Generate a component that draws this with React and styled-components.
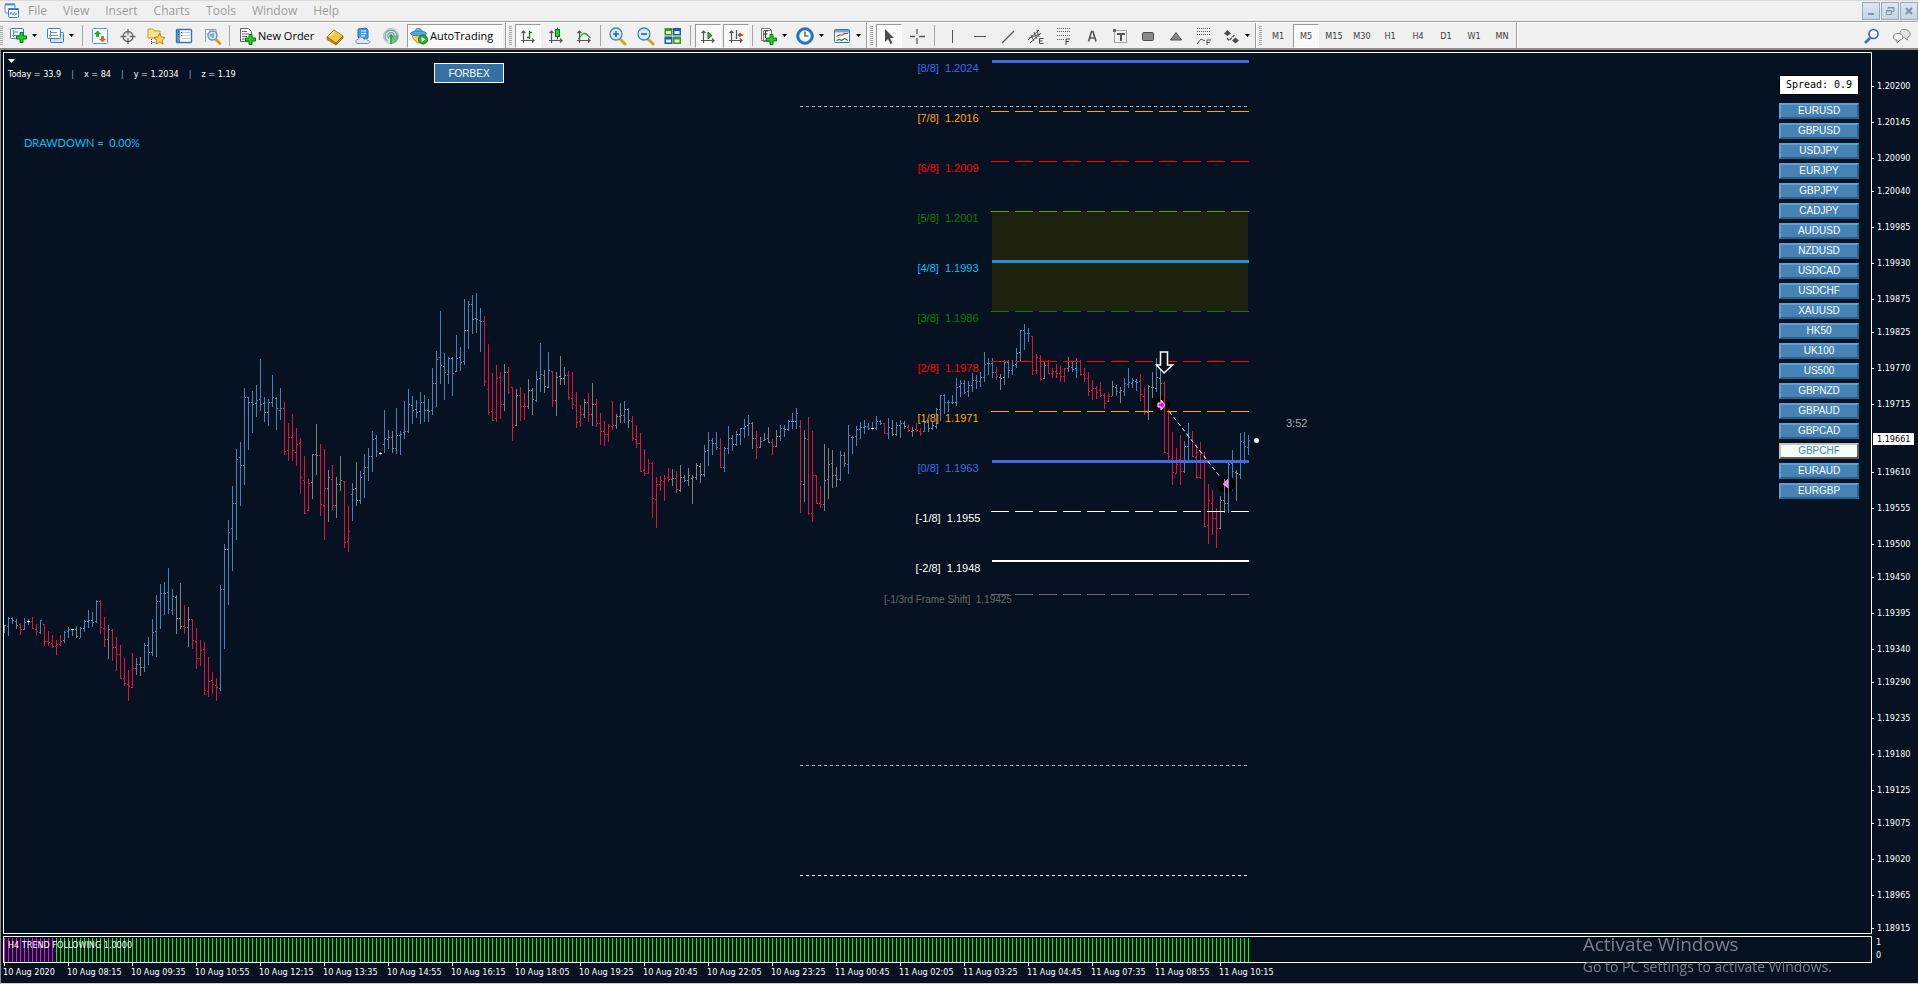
import React, { useState } from "react";
import styled, { createGlobalStyle, css } from "styled-components";

const UI_FONT = `"Open Sans", "Noto Sans", sans-serif`;
const TICK_FONT = `"DejaVu Sans Condensed", "DejaVu Sans", sans-serif`;
const ARIAL = `"Liberation Sans", Arial, sans-serif`;

const GlobalStyle = createGlobalStyle`
    * { box-sizing: border-box; }
    body { margin: 0; background: #061222; overflow: hidden; }
    button { font: inherit; color: inherit; padding: 0; border: none; background: none; cursor: pointer; }
`;

const Window = styled.div`
    height: 100vh;
    display: flex;
    flex-direction: column;
    background: #061222;
    font-family: ${UI_FONT};
`;

/* ---------- menu bar ---------- */

const MenuBar = styled.nav`
    display: flex;
    align-items: center;
    height: 22px;
    padding-left: 4px;
    background: #f0f0f0;
    border-top: 1px solid #dadada;
    border-bottom: 1px solid #a0a0a0;
`;

const MenuItem = styled.button`
    padding: 0 8px;
    font-size: 12px;
    line-height: 20px;
    color: #9c9c9c;
`;

const AppIcon = styled.svg`
    width: 16px;
    height: 16px;
    flex: none;
`;

const WindowButtons = styled.div`
    display: flex;
    gap: 1px;
    margin-left: auto;
`;

const WindowButton = styled.button`
    width: 18px;
    height: 18px;
    display: flex;
    align-items: center;
    justify-content: center;
    background: linear-gradient(#dbe6f2, #c3d4e6);
    border: 1px solid #93a9bf;
`;

/* ---------- toolbar ---------- */

const ToolBar = styled.div`
    display: flex;
    align-items: center;
    height: 28px;
    flex: none;
    background: #f0f0f0;
    border-top: 1px solid #fff;
    border-bottom: 2px solid #8a8a8a;
    color: #000;
`;

const Grip = styled.span`
    width: 3px;
    height: 19px;
    margin: 0 2px;
    background: repeating-linear-gradient(#a4a4a4 0 1px, #f4f4f4 1px 2px);

    &:first-child { margin-left: 0; }
`;

const Separator = styled.span`
    width: 1px;
    height: 21px;
    margin: 0 ${(p) => (p.$tight ? "2px" : "3px")};
    background: #a6a6a6;
`;

const Edge = styled.span`
    width: 2px;
    height: 25px;
    border-left: 1px solid #9a9a9a;
    border-right: 1px solid #fff;
`;

const pressed = css`
    background: #f9f9f9;
    border: 1px solid #fff;
    border-top-color: #9a9a9a;
    border-left-color: #9a9a9a;
`;

const ToolButton = styled.button`
    width: 26px;
    height: 24px;
    margin: 0 1px;
    flex: none;
    display: flex;
    align-items: center;
    justify-content: center;
    border: 1px solid transparent;
    ${(p) => p.$pressed && pressed}
`;

const DropButton = styled.button`
    width: 37px;
    height: 24px;
    padding-left: 3px;
    flex: none;
    display: flex;
    align-items: center;
    gap: 3px;
`;

const LabelButton = styled.button`
    display: flex;
    align-items: center;
    width: ${(p) => p.$width};
    height: 24px;
    padding-left: ${(p) => (p.$pressed ? "1px" : "3px")};
    margin: ${(p) => (p.$pressed ? "0 2px" : "0")};
    gap: 1px;
    font-size: 11px;
    white-space: nowrap;
    border: 1px solid transparent;
    ${(p) => p.$pressed && pressed}
`;

const TimeframeButton = styled(ToolButton)`
    font-family: ${TICK_FONT};
    font-size: 9px;
    color: #3c3c3c;
`;

const RightTools = styled.div`
    display: flex;
    gap: 2px;
    margin: 0 2px 0 auto;
`;

const IconBox = styled.svg`
    width: 20px;
    height: 20px;
    flex: none;
    display: block;
`;

const CaretDown = () => (
    <svg width="7" height="4" viewBox="0 0 7 4"><path d="M1 0h5L3.500 3z" fill="#000" /></svg>
);

const Plus = ({ x = 9, y = 8 }) => (
    <path
        transform={`translate(${x} ${y})`}
        d="M4 .5h3V4h3.500v3H7v3.500H4V7H.5V4H4z"
        fill="#1fd41f" stroke="#0a7d0a"
    />
);

const Axes = () => (
    <path d="M5.500 17V5M3.500 7l2-2 2 2M3 14.500h13M14 12.500l2 2-2 2" fill="none" stroke="#555" strokeWidth="1.200" />
);

const icons = {
    newChart: (
        <>
            <rect x="2.500" y="2.500" width="13" height="10" rx="1" fill="#eef6fd" stroke="#3f7fc0" />
            <path d="M5.500 4v7M4 9.500h7M5 6h5" stroke="#5d8fb8" fill="none" />
            <Plus x={8} y={6} />
        </>
    ),
    profiles: (
        <>
            <rect x="5.500" y="6.500" width="13" height="10" rx="1" fill="#cfe2f4" stroke="#3f7fc0" />
            <rect x="2.500" y="2.500" width="13" height="10" rx="1" fill="#f1f7fd" stroke="#3f7fc0" />
            <path d="M5.500 5v6M5 6.500h7M4 9.500h9" stroke="#7196b8" fill="none" />
        </>
    ),
    marketWatch: (
        <>
            <rect x="2.500" y="2.500" width="15" height="15" rx="1" fill="#f7fbff" stroke="#5b9bd5" />
            <path d="M7.500 5l3 3H8.500v2.500h-2V8h-2z" fill="#28b428" stroke="#0c860c" strokeWidth=".6" />
            <path d="M12.500 16l-3-3h2v-2.500h2V13h2z" fill="#f0642a" stroke="#c33c0c" strokeWidth=".6" />
        </>
    ),
    dataWindow: (
        <g fill="none" stroke="#666" strokeWidth="1.300">
            <circle cx="10" cy="10.500" r="5" />
            <path d="M10 3v6M10 12v6M2.500 10.500h6M11.500 10.500h6" />
        </g>
    ),
    navigator: (
        <>
            <path d="M2 3h5l1.500 2H14v7H2z" fill="#fbe48c" stroke="#c79a2a" />
            <path d="M5.500 13v5M5.500 16.500h3" stroke="#444" strokeDasharray="1 1" fill="none" />
            <path d="M13.500 7.500l1.800 3.500 3.700.5-2.700 2.700.7 3.800-3.500-1.800L10 18l.7-3.800L8 11.500l3.700-.5z" fill="#ffd75e" stroke="#b8801c" />
        </>
    ),
    terminal: (
        <>
            <rect x="2.500" y="3.500" width="15" height="13" rx="1" fill="#fff" stroke="#3473b6" strokeWidth="1.400" />
            <path d="M3 4h3v12H3z" fill="#5a98d8" />
            <path d="M4.500 5.500v1M4.500 8v1" stroke="#123a66" />
            <path d="M8 6.500h8M8 9.500h8M8 12.500h8" stroke="#b5cbe0" />
            <path d="M7 6.500h1M7 9.500h1" stroke="#c33" />
        </>
    ),
    tester: (
        <>
            <path d="M3.500 3v13M3 3.500h11v10M5 8h8M8 4v9" stroke="#9a9a9a" fill="#fafafa" />
            <circle cx="10.500" cy="9.500" r="4.500" fill="#cfe6f8" fillOpacity=".85" stroke="#5f97c4" strokeWidth="1.400" />
            <path d="M9 11V8M11 12V7" stroke="#4a6f90" />
            <path d="M14 13.500l4 4" stroke="#d79a22" strokeWidth="2.600" strokeLinecap="round" />
        </>
    ),
    newOrder: (
        <>
            <path d="M3.500 2.500h8l3 3v10h-11z" fill="#fff" stroke="#666" />
            <path d="M5 5.500h5M5 8h7M5 10.500h5M5 13h3" stroke="#666" />
            <Plus x={8} y={8} />
        </>
    ),
    book: (
        <>
            <path d="M2 11l7-7 9 6-7 7z" fill="#f5c545" stroke="#b57d12" />
            <path d="M2 11v2.500L11 19v-2zM11 17v2l7-7v-2z" fill="#c98f1b" stroke="#94620b" strokeWidth=".7" />
            <path d="M5 10l4-4" stroke="#fff2b0" strokeWidth="1.500" />
        </>
    ),
    cloud: (
        <>
            <path d="M5 3l8-1 2 2v8l-8 1-2-2z" fill="#3ea1ee" stroke="#1d6fbb" />
            <path d="M8 5h5M8 7.500h5M8 10h4" stroke="#e9f5ff" strokeWidth="1.200" />
            <path d="M5 17.500c-3 0-3-4 0-4 1-3 5-3 6 0 2-1.500 4 0 3.500 1 3 0 3 3 0 3z" fill="#dfe5ee" stroke="#7f8ca3" />
        </>
    ),
    signal: (
        <>
            <circle cx="10" cy="10" r="7.500" fill="#d8e8dc" stroke="#a9c5b4" />
            <path d="M10 18a8 8 0 0 0 7.500-9l-7.500 1z" fill="#52b152" fillOpacity=".7" />
            <path d="M6.500 15a6 6 0 1 1 7 0M8 12.500a3.300 3.300 0 1 1 4 0" fill="none" stroke="#6c9fb0" strokeWidth="1.200" />
            <circle cx="10" cy="10" r="1.800" fill="#2c9a3c" />
            <path d="M10 10v8" stroke="#2c9a3c" strokeWidth="1.500" />
        </>
    ),
    autoTrading: (
        <>
            <path d="M3 8c0 4 4 9 7 9s6-4 6-9z" fill="#f5cf58" stroke="#b98d22" />
            <path d="M5.500 7c0-6 8-6 8 0z" fill="#6db5e6" stroke="#2f7fb8" />
            <ellipse cx="9.500" cy="7.500" rx="8" ry="2.300" fill="#59a6dd" stroke="#2f7fb8" />
            <circle cx="14" cy="13.500" r="4.500" fill="#27b32c" stroke="#0f7d14" />
            <path d="M12.500 11l4 2.500-4 2.500z" fill="#fff" />
        </>
    ),
    barChart: (
        <>
            <Axes />
            <path d="M11.500 5v8M9 11.500h2.500M11.500 6.500H14" stroke="#0a8a0a" strokeWidth="1.300" fill="none" />
        </>
    ),
    candleChart: (
        <>
            <Axes />
            <path d="M11.500 1.500v12" stroke="#0a7a0a" />
            <rect x="9.500" y="3.500" width="4" height="7" fill="#22cc33" stroke="#0a7a0a" />
        </>
    ),
    lineChart: (
        <>
            <Axes />
            <path d="M4 13c2-1 4-6 6.500-5.500S14 10 16.500 12" stroke="#3a9a3a" strokeWidth="1.300" fill="none" />
        </>
    ),
    zoomIn: (
        <>
            <path d="M13 13l5 5" stroke="#d8a428" strokeWidth="3" strokeLinecap="round" />
            <circle cx="9" cy="8" r="6" fill="#d6ebfb" stroke="#3b86c8" strokeWidth="1.300" />
            <path d="M6 8h6M9 5v6" stroke="#2b6cab" strokeWidth="1.700" />
        </>
    ),
    zoomOut: (
        <>
            <path d="M13 13l5 5" stroke="#d8a428" strokeWidth="3" strokeLinecap="round" />
            <circle cx="9" cy="8" r="6" fill="#d6ebfb" stroke="#3b86c8" strokeWidth="1.300" />
            <path d="M6 8h6" stroke="#2b6cab" strokeWidth="1.700" />
        </>
    ),
    tile: (
        <>
            <rect x="1.500" y="2" width="8" height="7.500" fill="#3c9b14" />
            <rect x="10" y="2" width="8" height="7.500" fill="#1c55c9" />
            <rect x="1.500" y="10.500" width="8" height="7.500" fill="#1c55c9" />
            <rect x="10" y="10.500" width="8" height="7.500" fill="#3c9b14" />
            <path d="M3 6.500h5M11.500 6.500h5M3 15h5M11.500 15h5" stroke="#e8f3e0" strokeWidth="3" />
        </>
    ),
    autoScroll: (
        <>
            <Axes />
            <path d="M10 6l4 3.500-4 3.500z" fill="#22bb33" stroke="#0a7a0a" />
        </>
    ),
    chartShift: (
        <>
            <Axes />
            <path d="M10.500 4v9" stroke="#2a6496" strokeWidth="1.300" />
            <path d="M17 9h-5M14.500 7L12.500 9l2 2" stroke="#c8340c" strokeWidth="1.300" fill="none" />
        </>
    ),
    indicators: (
        <>
            <path d="M5.500 4.500h8v11h-8zM3.500 2.500h8l2 2v10h-10z" fill="#fff" stroke="#777" />
            <path d="M10 5c-2-1-2.500 0-2.500 2v5M5.500 8h4" stroke="#333" fill="none" strokeWidth="1.200" />
            <Plus x={8} y={8} />
        </>
    ),
    clock: (
        <>
            <circle cx="10" cy="10" r="7" fill="#f4faff" stroke="#1f78cf" strokeWidth="2.600" />
            <circle cx="10" cy="10" r="8.300" fill="none" stroke="#0d4c93" strokeWidth=".7" />
            <path d="M10 5.500V10h3.500" stroke="#333" strokeWidth="1.200" fill="none" />
        </>
    ),
    template: (
        <>
            <rect x="2.500" y="3.500" width="15" height="13" rx="1" fill="#fff" stroke="#3473b6" />
            <path d="M3 4h14v2.500H3z" fill="#6da5dc" />
            <path d="M4.500 10.500l3-1.500h3l2-1.500h3.500" stroke="#b03a20" fill="none" strokeWidth="1.200" />
            <path d="M4.500 14.500l3-1 2 1 3-2 3.500 2" stroke="#2a8a2a" fill="none" strokeWidth="1.200" />
        </>
    ),
    cursor: <path d="M6 3v13l3-3 2.500 5 2-1-2.500-5h4z" fill="#4a4a4a" />,
    crosshair: <path d="M10 3v5M10 12v6M3 10.500h5M12 10.500h6" stroke="#555" strokeWidth="1.300" />,
    vline: <path d="M10.500 4v13" stroke="#555" />,
    hline: <path d="M4 10.500h12" stroke="#555" />,
    trend: <path d="M4 17L16 5" stroke="#555" strokeWidth="1.300" />,
    channel: (
        <>
            <path d="M2 14L13 4M4 17L15 7M5 9l3 6M8 6l3 7M11 4l2 7M3 12l11-4" stroke="#555" fill="none" />
            <path d="M17.500 12.500h-4v5h4M13.500 15h3" stroke="#444" fill="none" />
        </>
    ),
    fibo: (
        <>
            <path d="M3 2.500h13M3 5.500h13M3 9.500h13M3 13.500h7" stroke="#555" strokeDasharray="1 1" />
            <path d="M16 13h-4v6M12 15.500h3" stroke="#444" fill="none" />
        </>
    ),
    text: <path d="M6.500 15.500l3-10h1.500l3 10M8 12h5" stroke="#555" strokeWidth="1.600" fill="none" />,
    label: (
        <>
            <rect x="4.500" y="4.500" width="12" height="12" fill="none" stroke="#555" strokeDasharray="1 1" />
            <path d="M3 3h3v3H3z" fill="#666" />
            <path d="M7 8h8M11 8v7" stroke="#555" strokeWidth="2" />
        </>
    ),
    rectangle: <rect x="4.500" y="6.500" width="11" height="8" rx="1" fill="#8a8a8a" stroke="#4c4c4c" />,
    triangle: <path d="M10 6.500l5.500 7.500h-11z" fill="#8a8a8a" stroke="#4c4c4c" />,
    fiboFan: (
        <>
            <path d="M3 2.500h13M3 5.500h13M3 8.500h13" stroke="#555" strokeDasharray="1 1" />
            <path d="M3 18l4-5 4 2M17 14h-4v5M13 16.500h3" stroke="#555" fill="none" />
        </>
    ),
    arrows: (
        <g fill="#4a4a4a">
            <path d="M6.500 4l3.500 3.500L6.500 10 3 7.500z" />
            <path d="M14.500 17.500L11 14.500l3.500-3 3.500 3z" />
            <path d="M6 12l2 2.500 6-6" fill="none" stroke="#4a4a4a" strokeWidth="1.300" strokeDasharray="3 1" />
        </g>
    ),
    search: (
        <>
            <path d="M8 12l-5 5" stroke="#3f6fd0" strokeWidth="2.600" />
            <circle cx="11.500" cy="8" r="4.500" fill="#fff" stroke="#2f5fcf" strokeWidth="1.600" />
        </>
    ),
    chat: (
        <>
            <path d="M12 3.500c7 0 8 7 3 8l.5 2.500-3-2.500c-6-.5-6-8-.5-8z" fill="#e4e4e4" stroke="#8a8a8a" />
            <path d="M6 7.500c6 0 6 6.500 2 6.500l-3 3v-3c-5 0-5-6.500 1-6.500z" fill="#fdfdfd" stroke="#808080" />
        </>
    ),
};

const Icon = ({ name }) => (
    <IconBox viewBox="0 0 20 20" aria-hidden="true">{icons[name]}</IconBox>
);

const Tool = ({ name, label, pressed: isPressed }) => (
    <ToolButton type="button" aria-label={label} $pressed={isPressed}><Icon name={name} /></ToolButton>
);

const Drop = ({ name, label }) => (
    <DropButton type="button" aria-label={label}>
        <Icon name={name} />
        <CaretDown />
    </DropButton>
);

/* ---------- chart area ---------- */

const Workspace = styled.main`
    flex: 1;
    min-height: 0;
    display: grid;
    grid-template-columns: minmax(0, 1fr) 46px;
    grid-template-rows: minmax(0, 1fr) 27px 18px;
    row-gap: 2px;
    padding-top: 2px;
    padding-left: 2px;
    border-left: 1px solid #8a8a8a;
    border-bottom: 1px solid #d0d0d0;
`;

const Frame = styled.section`
    position: relative;
    border: 1px solid #fff;
    overflow: hidden;
`;

const Canvas = styled.svg`
    display: block;
    width: 100%;
    height: 100%;
    overflow: hidden;

    text { white-space: pre; }
`;

const AxisCanvas = styled(Canvas)`
    overflow: visible;
    font-family: ${TICK_FONT};
    font-size: 9px;
    fill: #fff;
`;

const Overlay = styled.div`
    position: absolute;
    inset: 0;
    display: flex;
    justify-content: space-between;
`;

const InfoColumn = styled.div`
    padding: 6px 0 0 4px;
    color: #fff;
`;

const InfoHeader = styled.div`
    display: grid;
    grid-template-columns: 426px auto;
    align-items: start;
`;

const OneClick = styled.button`
    display: block;
    height: 4px;

    svg { display: block; }
`;

const InfoLine = styled.div`
    display: flex;
    gap: 10px;
    padding-top: 5px;
    font-family: ${TICK_FONT};
    font-size: 9px;
    line-height: 12px;
`;

const Divider = styled.span`
    color: #8fb4d8;
`;

const BrandButton = styled.button`
    width: 70px;
    height: 20px;
    margin-top: 4px;
    background: #3570a5;
    border: 1px solid #fff;
    font-family: ${ARIAL};
    font-size: 10px;
    color: #fff;
`;

const Drawdown = styled.div`
    padding: 52px 0 0 16px;
    font-family: Lato, sans-serif;
    font-size: 11px;
    line-height: 16px;
    color: #00bfff;
    white-space: pre;
`;

const SymbolPanel = styled.div`
    width: 80px;
    margin: 22px 12px 0 0;
    display: flex;
    flex-direction: column;
    gap: 4px;
`;

const SpreadBox = styled.output`
    height: 20px;
    margin-bottom: 4px;
    border: 1px solid #000;
    background: #fff;
    color: #000;
    font-family: "DejaVu Sans Mono", monospace;
    font-size: 10px;
    line-height: 18px;
    text-align: center;
    white-space: nowrap;
`;

const SymbolButton = styled.button`
    height: 16px;
    font-family: ${ARIAL};
    font-size: 10px;
    line-height: 12px;
    color: #fff;
    background: #4682b4;
    border: 2px solid;
    border-color: #5f9fd6 #28628f #28628f #5f9fd6;

    ${(p) => p.$active && css`
        color: #4682b4;
        background: #f5fffa;
        border-color: #c4c4c4 #5e5e5e #5e5e5e #c4c4c4;
    `}
`;

const IndicatorName = styled.div`
    position: absolute;
    left: 4px;
    top: 1px;
    font-family: ${TICK_FONT};
    font-size: 9px;
    line-height: 14px;
    color: #fff;
`;

const IndicatorScale = styled.div`
    display: flex;
    flex-direction: column;
    padding-left: 4px;
    font-family: ${TICK_FONT};
    font-size: 9px;
    line-height: 13px;
    color: #fff;
`;

const TimeAxis = styled.div`
    grid-column: 1 / -1;
    display: flex;
    margin-top: -2px;
`;

const TimeLabel = styled.span`
    flex: none;
    width: 64px;
    font-family: ${TICK_FONT};
    font-size: 9px;
    line-height: 12px;
    color: #fff;
    white-space: nowrap;

    &::before {
        content: "";
        display: block;
        width: 1px;
        height: 3px;
        margin-left: 1px;
        background: #fff;
    }
`;

const Watermark = styled.aside`
    position: fixed;
    right: 86px;
    bottom: 7px;
    color: #7b8189;
    pointer-events: none;
    font-size: 14px;
    line-height: 20px;

    strong {
        display: block;
        font-weight: 400;
        font-size: 19px;
        line-height: 26px;
    }
`;

// tone, high, low, open, close
const BARS = `
g625,633,633,625 b617,636,626,618 b617,624,618,620 g619,629,621,625 r623,635,624,629 b618,630,629,622 w619,625,621,621 r617,629,621,628
r624,636,629,631 b620,634,632,620 r624,646,624,641 r631,646,641,642 r635,648,643,646 r640,655,646,644 r635,646,644,641 b631,643,640,632
b627,638,631,629 w629,636,629,629 g626,638,629,636 b627,638,638,628 b620,632,628,621 b610,628,621,620 b612,627,620,622 b600,623,621,601
r600,634,601,627 r617,647,628,639 g625,659,639,629 r629,661,630,647 r637,671,647,654 r645,679,654,678 r658,686,678,683 r670,701,684,686
r653,688,687,668 b658,675,668,664 g657,676,664,667 b643,672,667,645 b637,665,645,652 b619,656,652,632 b595,657,631,601 b584,629,601,593
b582,615,593,593 b568,614,592,609 b589,615,610,596 g595,634,597,618 g583,629,618,626 r605,634,626,627 g607,647,627,619 r619,649,619,640
r628,669,641,658 r640,666,658,650 r642,695,649,690 r657,697,691,681 r672,694,680,684 r678,701,685,687 b585,691,688,589 b544,649,589,549
b520,605,549,532 b486,571,528,503 b449,540,503,459 b442,506,457,465 b388,485,465,397 b397,450,397,402 b391,433,402,404 b385,417,403,400
b359,411,399,404 b397,422,403,412 b399,426,412,402 b375,407,402,397 b397,430,398,408 b388,420,410,408 r402,455,408,451 r423,461,450,437
r414,461,437,450 r428,466,452,444 r438,494,443,477 r456,514,480,513 r479,511,510,483 g454,499,482,454 g424,475,454,455 r444,516,455,504
r449,540,505,488 g470,522,488,477 r465,510,479,505 g477,518,505,484 g456,491,484,480 r481,548,481,542 r506,552,541,531 b483,521,494,489
g462,506,488,500 b471,504,500,477 b454,498,473,467 b448,481,467,456 b431,472,456,439 b435,457,438,451 w452,455,453,453 b410,453,444,438
b430,449,439,437 g431,453,437,448 b408,454,448,435 b431,455,435,434 b401,439,432,431 b389,433,431,404 b396,424,405,410 b400,418,409,412
b392,424,411,402 b395,422,402,410 b399,422,410,411 b368,415,410,383 b351,407,383,359 b311,384,357,365 b353,400,366,372 b357,384,374,358
b357,396,358,373 b335,372,371,358 b347,371,357,362 b299,365,361,330 b301,349,330,304 b295,334,304,319 b293,333,318,319 b308,352,320,321
r316,386,321,381 r344,415,389,412 r373,421,411,420 r365,422,418,378 r372,419,377,404 g364,411,404,372 r367,394,372,392 r387,441,387,427
g389,426,425,395 r387,421,395,406 r393,420,406,406 g379,409,406,390 g388,415,390,399 b371,402,400,379 b343,392,378,374 g370,393,375,386
b352,388,387,370 r371,407,371,400 g372,416,400,377 g356,385,376,378 g367,385,378,375 r371,400,375,397 r372,409,398,404 r392,428,405,422
r405,427,421,414 g399,418,414,402 r393,422,402,414 g383,426,414,404 r399,427,404,423 r413,445,423,431 r421,446,431,434 r424,442,434,426
r401,430,426,425 g414,429,425,416 g403,423,416,415 b401,423,415,409 g408,428,409,420 r416,441,421,438 r425,448,439,443 r433,472,443,471
r449,476,470,473 r459,474,473,463 r462,518,463,498 r477,528,499,484 r476,491,484,480 r475,501,481,478 r468,482,477,479 g469,486,479,478
r471,493,478,489 g465,492,490,477 b475,482,477,480 g468,486,480,475 g475,504,478,477 g463,480,477,465 g463,483,466,474 b445,477,474,451
b432,466,450,440 b438,455,440,443 b432,450,443,447 r438,468,448,467 b447,472,467,448 b426,454,448,438 b435,451,438,444 b431,446,444,434
b428,445,434,428 b419,438,428,426 b415,436,425,423 g422,449,423,438 r431,459,438,447 g437,448,447,441 g433,441,440,439 g427,443,438,442
r439,455,442,446 g430,447,446,436 b425,441,436,428 b425,437,428,429 b420,431,429,421 b413,429,421,421 b408,429,421,413 r420,513,426,481
g430,502,484,438 r417,515,439,513 r431,522,513,475 r475,504,475,503 r486,508,503,504 g444,511,504,480 g448,499,479,464 g450,488,463,475
g467,487,475,479 b451,481,479,455 g452,467,455,463 b425,474,464,435 b436,454,437,437 b426,446,436,429 b422,439,429,427 b420,434,427,426
b423,430,426,428 w422,430,428,428 b416,430,428,421 b420,425,421,423 r423,434,423,433 b418,439,433,427 g420,436,428,434 b422,436,434,425
b420,438,425,423 g421,429,423,426 r424,432,427,430 g427,437,431,430 r423,432,429,430 r428,436,431,433 b421,432,431,422 g420,432,422,428
g421,430,428,425 b408,429,426,409 b395,421,409,395 b394,414,395,402 b400,412,402,402 b395,404,402,402 b378,406,402,387 b380,397,386,383
b380,394,383,392 b381,397,391,385 b373,392,385,380 b375,389,380,381 b372,387,381,377 b352,382,377,364 b358,375,363,363 b358,378,363,372
r367,380,372,376 g374,390,377,378 b360,385,377,362 b360,378,362,370 b360,375,370,365 b348,368,364,353 b330,362,352,330 b324,350,330,333
b328,342,333,333 r336,375,336,370 r354,374,370,357 r355,381,358,379 g361,379,378,365 r360,374,365,373 r368,378,373,371 r364,378,371,373
r365,382,373,376 r368,382,376,368 g357,372,368,366 b362,372,367,369 b358,378,368,361 r360,376,361,374 r368,382,374,378 r372,396,378,391
r380,400,390,388 r386,399,388,392 r382,397,390,395 r393,409,395,403 r392,402,401,396 g381,396,396,386 b385,396,387,391 g387,403,392,390
b378,396,391,383 b368,388,384,382 b378,388,383,380 b379,391,381,382 r374,401,381,394 r387,415,396,412 g385,420,412,386 g372,398,387,387
b358,392,388,377 g360,400,378,383 r382,453,383,452 r409,462,453,456 r432,485,458,472 r448,474,473,464 r435,485,459,471 b441,473,471,446
b423,463,446,437 r431,457,436,456 r444,479,457,477 r442,479,477,453 r452,527,462,526 r484,544,525,500 r490,535,503,518 r508,548,518,528
g496,529,528,500 g479,513,500,503 b462,513,503,464 b450,491,463,471 g470,501,472,473 b433,479,474,441 b432,464,442,446 b435,455,447,440
`.trim().split(/\s+/).map((item) => {
    const [high, low, open, close] = item.slice(1).split(",").map(Number);
    return { tone: item[0], high, low, open, close };
});

const TONES = { b: "#4682b4", r: "#dc143c", g: "#808080", w: "#4682b4" };
const BAR_STEP = 4;

// murrey math levels, one every 50px
const LEVELS = [
    { name: "[8/8]", price: "1.2024", color: "#4169e1", width: 3 },
    { name: "[7/8]", price: "1.2016", color: "#ffa500", dashed: true },
    { name: "[6/8]", price: "1.2009", color: "#ff0000", dashed: true },
    { name: "[5/8]", price: "1.2001", color: "#008000", line: "#22b030", dashed: true },
    { name: "[4/8]", price: "1.1993", color: "#00bfff", line: "#1e90e0", width: 3 },
    { name: "[3/8]", price: "1.1986", color: "#008000", dashed: true },
    { name: "[2/8]", price: "1.1978", color: "#ff0000", dashed: true },
    { name: "[1/8]", price: "1.1971", color: "#ffa500", dashed: true },
    { name: "[0/8]", price: "1.1963", color: "#4169e1", width: 3 },
    { name: "[-1/8]", price: "1.1955", color: "#ffffff", dashed: true },
    { name: "[-2/8]", price: "1.1948", color: "#ffffff", width: 2 },
];

const PRICES = [
    "1.20200", "1.20145", "1.20090", "1.20040", "1.19985", "1.19930", "1.19875", "1.19825",
    "1.19770", "1.19715", "1.19661", "1.19610", "1.19555", "1.19500", "1.19450", "1.19395",
    "1.19340", "1.19290", "1.19235", "1.19180", "1.19125", "1.19075", "1.19020", "1.18965", "1.18915",
];
const CURRENT = "1.19661";

const priceToY = (price) => Math.round(34 + (1.202 - Number(price)) * 65500);

const SYMBOLS = [
    "EURUSD", "GBPUSD", "USDJPY", "EURJPY", "GBPJPY", "CADJPY", "AUDUSD", "NZDUSD", "USDCAD", "USDCHF",
    "XAUUSD", "HK50", "UK100", "US500", "GBPNZD", "GBPAUD", "GBPCAD", "GBPCHF", "EURAUD", "EURGBP",
];

const TIMES = [
    "10 Aug 2020", "10 Aug 08:15", "10 Aug 09:35", "10 Aug 10:55", "10 Aug 12:15", "10 Aug 13:35", "10 Aug 14:55",
    "10 Aug 16:15", "10 Aug 18:05", "10 Aug 19:25", "10 Aug 20:45", "10 Aug 22:05", "10 Aug 23:25", "11 Aug 00:45",
    "11 Aug 02:05", "11 Aug 03:25", "11 Aug 04:45", "11 Aug 07:35", "11 Aug 08:55", "11 Aug 10:15",
];

const TIMEFRAMES = ["M1", "M5", "M15", "M30", "H1", "H4", "D1", "W1", "MN"];

function PriceBars() {
    return (
        <g shapeRendering="crispEdges">
            {BARS.map((bar, i) => {
                const x = 4 + i * BAR_STEP;
                const color = TONES[bar.tone];
                const tick = bar.tone === "w" ? "#fff" : color;
                return (
                    <g key={i}>
                        <rect x={x} y={bar.high} width="1" height={bar.low - bar.high} fill={color} />
                        <rect x={x - 1} y={bar.open} width="1" height="1" fill={tick} />
                        <rect x={x + 1} y={bar.close} width="1" height="1" fill={tick} />
                        {bar.tone === "w" && <rect x={x} y={bar.close} width="1" height="1" fill="#fff" />}
                    </g>
                );
            })}
        </g>
    );
}

function Levels() {
    return (
        <g fontFamily={ARIAL} fontSize="11" textAnchor="middle">
            {LEVELS.map(({ name, price, color, line, width = 1, dashed }, i) => {
                const y = 61 + i * 50;
                const lineY = width === 2 ? y : y + 0.5;
                return (
                    <g key={name}>
                        <line
                            x1={dashed ? 991 : 992} x2="1249" y1={lineY} y2={lineY}
                            stroke={line || color} strokeWidth={width} strokeDasharray={dashed ? "18 6" : undefined}
                        />
                        <text x="948" y={y + 11} fill={color}>{`${name}  ${price}`}</text>
                    </g>
                );
            })}
            <line x1="991" x2="1249" y1="594.500" y2="594.500" stroke="#696969" strokeDasharray="18 6" />
            <text x="948" y="603" fontSize="10" fill="#696969">[-1/3rd Frame Shift]  1.19425</text>
        </g>
    );
}

function Trades() {
    return (
        <g>
            <path d="M1165 406L1224 482" stroke="#fff" strokeDasharray="4 3" />
            <circle cx="1161" cy="405" r="9" fill="#000" />
            <circle cx="1226" cy="484" r="9" fill="#000" />
            <rect x="1160" y="362" width="1" height="38" fill="#808080" />
            <rect x="1164" y="396" width="1" height="20" fill="#dc143c" />
            <rect x="1224" y="479" width="1" height="16" fill="#808080" />
            <rect x="1228" y="474" width="1" height="20" fill="#4682b4" />
            <path d="M1158 403h3v-3l4 5-4 5v-3h-3z" fill="#ff00ff" stroke="#fff" />
            <path d="M1223 484l5-5v9z" fill="#ee82ee" stroke="#ffc0ff" strokeWidth=".5" />
            <path d="M1160.500 352h7v13h5l-8.500 8-7.500-8h4z" fill="#061222" stroke="#fff" strokeWidth="1.500" />
        </g>
    );
}

function PlotCanvas() {
    return (
        <Canvas role="img" aria-label="GBPCHF price chart">
            {/* the frame's inner corner sits at 4,53 in chart units */}
            <g transform="translate(-4 -53)">
                <rect x="992" y="211" width="256" height="100" fill="#1f220f" />
                <PriceBars />
                <g strokeDasharray="3 3">
                    <path d="M800 106.500h448M800 765.500h448" stroke="#b4b4b4" />
                    <path d="M800 875.500h448" stroke="#fff" />
                </g>
                <Levels />
                <Trades />
                <circle cx="1256.500" cy="440.500" r="2.500" fill="#fff" />
                <text x="1286" y="427" fontFamily={ARIAL} fontSize="11" fill="#a9a9a9">3:52</text>
            </g>
        </Canvas>
    );
}

function PriceAxis() {
    return (
        <AxisCanvas>
            {PRICES.map((price) => {
                const y = priceToY(price);
                const current = price === CURRENT;
                return (
                    <g key={price}>
                        {current
                            ? <rect x="1" y={y - 6} width="41" height="12" />
                            : <rect x="0" y={y} width="2" height="1" />}
                        <text x="5" y={y + 3} fill={current ? "#000" : "#fff"}>{price}</text>
                    </g>
                );
            })}
        </AxisCanvas>
    );
}

function TrendCanvas() {
    return (
        <Canvas shapeRendering="crispEdges" aria-hidden="true">
            {BARS.map((_, i) => (
                <rect key={i} x={i * BAR_STEP} y="1" width="1" height="24" fill={i < 13 ? "#ff00ff" : "#00ff00"} />
            ))}
        </Canvas>
    );
}

function Toolbar() {
    const [timeframe, setTimeframe] = useState("M5");

    return (
        <ToolBar role="toolbar">
            <Grip />
            <Drop name="newChart" label="New chart" />
            <Drop name="profiles" label="Profiles" />
            <Separator />
            <Tool name="marketWatch" label="Market Watch" />
            <Tool name="dataWindow" label="Data Window" />
            <Tool name="navigator" label="Navigator" />
            <Tool name="terminal" label="Terminal" />
            <Tool name="tester" label="Strategy Tester" />
            <Separator />
            <LabelButton type="button" $width="88px"><Icon name="newOrder" />New Order</LabelButton>
            <Tool name="book" label="MetaEditor" />
            <Tool name="cloud" label="Hosting" />
            <Tool name="signal" label="Signals" />
            <LabelButton type="button" $width="96px" $pressed><Icon name="autoTrading" />AutoTrading</LabelButton>
            <Edge />
            <Grip />
            <Tool name="barChart" label="Bar chart" pressed />
            <Tool name="candleChart" label="Candlesticks" />
            <Tool name="lineChart" label="Line chart" />
            <Separator $tight />
            <Tool name="zoomIn" label="Zoom in" />
            <Tool name="zoomOut" label="Zoom out" />
            <Tool name="tile" label="Tile windows" />
            <Separator />
            <Tool name="autoScroll" label="Auto scroll" pressed />
            <Tool name="chartShift" label="Chart shift" pressed />
            <Separator $tight />
            <Drop name="indicators" label="Indicators" />
            <Drop name="clock" label="Periods" />
            <Drop name="template" label="Templates" />
            <Edge />
            <Grip />
            <Tool name="cursor" label="Cursor" pressed />
            <Tool name="crosshair" label="Crosshair" />
            <Separator />
            <Tool name="vline" label="Vertical line" />
            <Tool name="hline" label="Horizontal line" />
            <Tool name="trend" label="Trendline" />
            <Tool name="channel" label="Equidistant channel" />
            <Tool name="fibo" label="Fibonacci retracement" />
            <Tool name="text" label="Text" />
            <Tool name="label" label="Text label" />
            <Tool name="rectangle" label="Rectangle" />
            <Tool name="triangle" label="Triangle" />
            <Tool name="fiboFan" label="Fibonacci expansion" />
            <Drop name="arrows" label="Arrows" />
            <Edge />
            <Grip />
            {TIMEFRAMES.map((tf) => (
                <TimeframeButton key={tf} type="button" $pressed={tf === timeframe} onClick={() => setTimeframe(tf)}>
                    {tf}
                </TimeframeButton>
            ))}
            <Edge />
            <RightTools>
                <Tool name="search" label="Search" />
                <Tool name="chat" label="Community" />
            </RightTools>
        </ToolBar>
    );
}

function App() {
    const [symbol, setSymbol] = useState("GBPCHF");

    return (
        <Window>
            <GlobalStyle />
            <MenuBar>
                <AppIcon viewBox="0 0 16 16" aria-hidden="true">
                    <rect x="1" y="1" width="10" height="9" rx="1" fill="#fff" stroke="#4f8fe0" />
                    <path d="M1 1.500h10" stroke="#4f8fe0" strokeWidth="2" />
                    <rect x="4.500" y="5.500" width="10" height="9" rx="1" fill="#fff" stroke="#3c7fd8" />
                    <path d="M4.500 6h10" stroke="#3c7fd8" strokeWidth="2" />
                    <path d="M6 12l1-3 2 3 1.500-3 1.500 3 1-2" fill="none" stroke="#5b8fc8" />
                </AppIcon>
                {["File", "View", "Insert", "Charts", "Tools", "Window", "Help"].map((item) => (
                    <MenuItem key={item} type="button">{item}</MenuItem>
                ))}
                <WindowButtons>
                    <WindowButton type="button" aria-label="Minimize">
                        <svg width="10" height="10"><path d="M2 8h6" stroke="#7f92a6" strokeWidth="2" /></svg>
                    </WindowButton>
                    <WindowButton type="button" aria-label="Restore">
                        <svg width="10" height="10" fill="none" stroke="#7f92a6">
                            <path d="M3 3V1.500h6v4H7M1.500 4.500h5v4h-5zM1 5h6M3 2h6" />
                        </svg>
                    </WindowButton>
                    <WindowButton type="button" aria-label="Close">
                        <svg width="10" height="10"><path d="M2 2l6 6M8 2L2 8" stroke="#7f92a6" strokeWidth="2" /></svg>
                    </WindowButton>
                </WindowButtons>
            </MenuBar>

            <Toolbar />

            <Workspace>
                <Frame>
                    <PlotCanvas />
                    <Overlay>
                        <InfoColumn>
                            <InfoHeader>
                                <div>
                                    <OneClick type="button" aria-label="Toggle one click trading">
                                        <svg width="7" height="4"><path d="M0 0h7L3.500 4z" fill="#fff" /></svg>
                                    </OneClick>
                                    <InfoLine>
                                        <span>Today = 33.9</span><Divider>|</Divider>
                                        <span>x = 84</span><Divider>|</Divider>
                                        <span>y = 1.2034</span><Divider>|</Divider>
                                        <span>z = 1.19</span>
                                    </InfoLine>
                                </div>
                                <BrandButton type="button">FORBEX</BrandButton>
                            </InfoHeader>
                            <Drawdown>{"DRAWDOWN =  0.00%"}</Drawdown>
                        </InfoColumn>
                        <SymbolPanel>
                            <SpreadBox>Spread: 0.9</SpreadBox>
                            {SYMBOLS.map((name) => (
                                <SymbolButton key={name} type="button" $active={name === symbol} onClick={() => setSymbol(name)}>
                                    {name}
                                </SymbolButton>
                            ))}
                        </SymbolPanel>
                    </Overlay>
                </Frame>
                <PriceAxis />
                <Frame>
                    <TrendCanvas />
                    <IndicatorName>H4 TREND FOLLOWING 1.0000</IndicatorName>
                </Frame>
                <IndicatorScale>
                    <span>1</span>
                    <span>0</span>
                </IndicatorScale>
                <TimeAxis>
                    {TIMES.map((time) => <TimeLabel key={time}>{time}</TimeLabel>)}
                </TimeAxis>
            </Workspace>

            <Watermark>
                <strong>Activate Windows</strong>
                Go to PC settings to activate Windows.
            </Watermark>
        </Window>
    );
}

export default App;
